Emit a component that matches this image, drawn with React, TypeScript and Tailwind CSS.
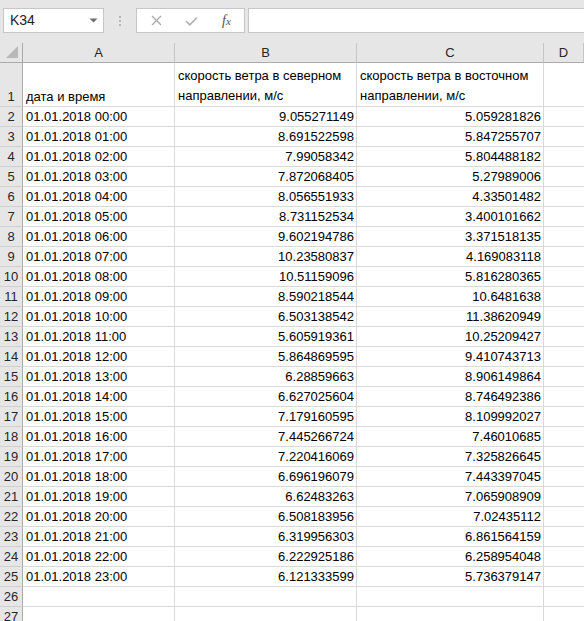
import React from "react";

const rows: [string, string, string][] = [
  ["01.01.2018 00:00", "9.055271149", "5.059281826"],
  ["01.01.2018 01:00", "8.691522598", "5.847255707"],
  ["01.01.2018 02:00", "7.99058342", "5.804488182"],
  ["01.01.2018 03:00", "7.872068405", "5.27989006"],
  ["01.01.2018 04:00", "8.056551933", "4.33501482"],
  ["01.01.2018 05:00", "8.731152534", "3.400101662"],
  ["01.01.2018 06:00", "9.602194786", "3.371518135"],
  ["01.01.2018 07:00", "10.23580837", "4.169083118"],
  ["01.01.2018 08:00", "10.51159096", "5.816280365"],
  ["01.01.2018 09:00", "8.590218544", "10.6481638"],
  ["01.01.2018 10:00", "6.503138542", "11.38620949"],
  ["01.01.2018 11:00", "5.605919361", "10.25209427"],
  ["01.01.2018 12:00", "5.864869595", "9.410743713"],
  ["01.01.2018 13:00", "6.28859663", "8.906149864"],
  ["01.01.2018 14:00", "6.627025604", "8.746492386"],
  ["01.01.2018 15:00", "7.179160595", "8.109992027"],
  ["01.01.2018 16:00", "7.445266724", "7.46010685"],
  ["01.01.2018 17:00", "7.220416069", "7.325826645"],
  ["01.01.2018 18:00", "6.696196079", "7.443397045"],
  ["01.01.2018 19:00", "6.62483263", "7.065908909"],
  ["01.01.2018 20:00", "6.508183956", "7.02435112"],
  ["01.01.2018 21:00", "6.319956303", "6.861564159"],
  ["01.01.2018 22:00", "6.222925186", "6.258954048"],
  ["01.01.2018 23:00", "6.121333599", "5.736379147"],
  ["", "", ""],
  ["", "", ""],
];

const rowHead =
  "h-[20px] bg-[#e6e6e6] border-r border-r-[#ababab] border-b border-b-[#d0d0d0] flex items-end justify-center leading-[19px] text-[#262626]";
const cell = "h-[20px] border-r border-b border-[#d9d9d9] flex items-end leading-[19px] overflow-hidden whitespace-nowrap";

export default function App() {
  return (
    <div className="w-[584px] h-[621px] overflow-hidden bg-white font-['Liberation_Sans',Arial,sans-serif] text-[13px] text-black">
      {/* Toolbar */}
      <div className="h-[43px] bg-[#e6e6e6] flex items-start pt-[8px] pl-[3px]">
        <div className="w-[101px] h-[25px] bg-white border border-[#c6c6c6] flex items-center pl-[6px] pr-[4px]">
          <span className="flex-1 text-[14px] text-[#222]">K34</span>
          <svg width="9" height="5" viewBox="0 0 9 5" className="mr-[1px]">
            <path d="M0.5 0.5 L8.5 0.5 L4.5 4.5 Z" fill="#6f6f6f" />
          </svg>
        </div>
        <div className="w-[32px] h-[25px] flex flex-col items-center justify-center gap-[2px]">
          <div className="w-[2px] h-[2px] bg-[#b8b8b8]" />
          <div className="w-[2px] h-[2px] bg-[#b8b8b8]" />
          <div className="w-[2px] h-[2px] bg-[#b8b8b8]" />
        </div>
        <div className="w-[109px] h-[25px] bg-white border border-[#c6c6c6] flex items-center">
          <div className="w-[36px] flex justify-center pl-[2px]">
            <svg width="11" height="11" viewBox="0 0 11 11">
              <path d="M1 1 L10 10 M10 1 L1 10" stroke="#a8a8a8" strokeWidth="1.2" />
            </svg>
          </div>
          <div className="w-[36px] flex justify-center">
            <svg width="13" height="10" viewBox="0 0 13 10">
              <path d="M1 5 L4.8 8.8 L12 1.5" stroke="#b0b0b0" strokeWidth="1.6" fill="none" />
            </svg>
          </div>
          <div className="w-[35px] flex justify-center">
            <span className="font-['Liberation_Serif',serif] italic text-[14px] text-[#555] leading-none">
              f<span className="text-[11px]">x</span>
            </span>
          </div>
        </div>
        <div className="ml-[3px] flex-1 h-[25px] bg-white border border-[#c6c6c6] border-r-0" />
      </div>

      {/* Grid */}
      <div className="grid grid-cols-[23px_152px_182px_187px_1fr]">
        {/* header row */}
        <div className="h-[20px] bg-[#e6e6e6] border-r border-b border-[#ababab] relative">
          <svg width="14" height="14" viewBox="0 0 14 14" className="absolute right-[3px] bottom-[3px]">
            <path d="M13 1 L13 13 L1 13 Z" fill="#b8b8b8" />
          </svg>
        </div>
        {["A", "B", "C", "D"].map((c) => (
          <div
            key={c}
            className="h-[20px] bg-[#e6e6e6] border-r border-r-[#c6c6c6] border-b border-b-[#ababab] flex items-center justify-center text-[13px] text-[#262626]"
          >
            {c}
          </div>
        ))}

        {/* row 1 */}
        <div className="h-[44px] bg-[#e6e6e6] border-r border-r-[#ababab] border-b border-b-[#d0d0d0] flex items-end justify-center leading-[19px] text-[#262626]">
          1
        </div>
        <div className="h-[44px] border-r border-b border-[#d9d9d9] flex items-end leading-[19px] pl-[3px]">
          дата и время
        </div>
        <div className="h-[44px] border-r border-b border-[#d9d9d9] flex items-end pl-[3px]">
          <div className="leading-[20px]">
            скорость ветра в северном
            <br />
            направлении, м/с
          </div>
        </div>
        <div className="h-[44px] border-r border-b border-[#d9d9d9] flex items-end pl-[3px]">
          <div className="leading-[20px]">
            скорость ветра в восточном
            <br />
            направлении, м/с
          </div>
        </div>
        <div className="h-[44px] border-b border-[#d9d9d9]" />

        {rows.map((r, i) => (
          <React.Fragment key={i}>
            <div className={rowHead}>{i + 2}</div>
            <div className={`${cell} pl-[3px]`}>{r[0]}</div>
            <div className={`${cell} justify-end pr-[2px]`}>{r[1]}</div>
            <div className={`${cell} justify-end pr-[2px]`}>{r[2]}</div>
            <div className="h-[20px] border-b border-[#d9d9d9]" />
          </React.Fragment>
        ))}
      </div>
    </div>
  );
}
